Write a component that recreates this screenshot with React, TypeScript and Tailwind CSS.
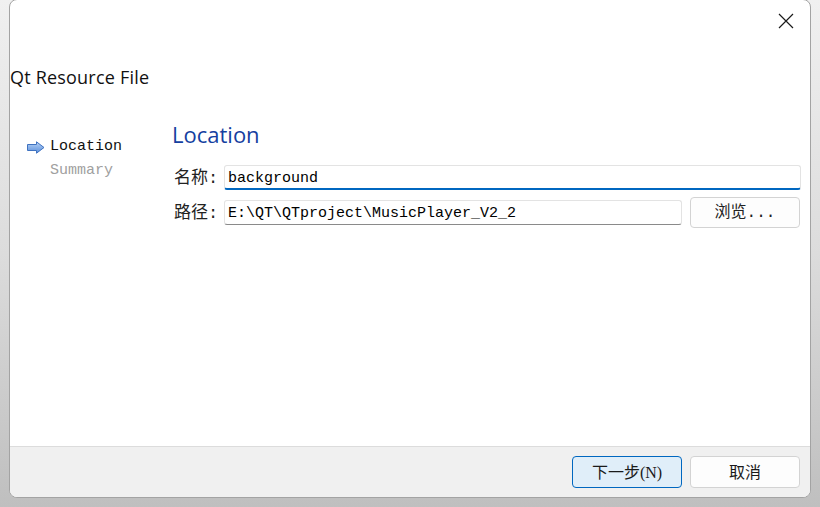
import React from 'react';

const mono = { fontFamily: '"Liberation Mono", "Noto Sans CJK SC", monospace' };
const serifCjk = { fontFamily: '"Liberation Serif", "Noto Sans CJK SC", serif' };

const NavArrow = () => (
  <svg width="18" height="13" viewBox="0 0 18 13" className="shrink-0">
    <defs>
      <linearGradient id="arrowFill" x1="0" y1="0" x2="0" y2="1">
        <stop offset="0" stopColor="#b9d3f5" />
        <stop offset="1" stopColor="#5a8fdc" />
      </linearGradient>
    </defs>
    <path d="M0.5 3.5 H9.5 V0.8 L17 6.5 L9.5 12.2 V9.5 H0.5 Z" fill="url(#arrowFill)" stroke="#3f72c0" strokeWidth="1" strokeLinejoin="round" />
  </svg>
);

const App = () => {
  return (
    <div className="w-[820px] h-[507px] overflow-hidden bg-gradient-to-b from-[#f0f0f0] via-[#dcdcdc] to-[#bfbfbf]">
      <div className="ml-[9px] mt-[-1px] w-[802px] h-[499px] flex flex-col bg-white border border-[#a3a3a3] rounded-[8px] overflow-hidden">
        {/* title bar */}
        <div className="h-[40px] flex justify-end pt-[13px] pr-[16px]">
          <svg width="16" height="16" viewBox="0 0 16 16">
            <path d="M1 1 L15 15 M15 1 L1 15" stroke="#1a1a1a" strokeWidth="1.2" />
          </svg>
        </div>
        <div className="mt-[25px] h-[24px] leading-[24px] text-[18px] tracking-[0.2px] text-[#111]" style={{ fontFamily: '"Open Sans", sans-serif' }}>
          Qt Resource File
        </div>

        {/* body */}
        <div className="flex-1 flex">
          <div className="w-[162px] pl-[17px] pt-[46px] text-[15px] leading-[24px]" style={mono}>
            <div className="flex items-center gap-[5px] text-[#111]">
              <NavArrow />
              <span>Location</span>
            </div>
            <div className="pl-[23px] text-[#a0a0a0]">Summary</div>
          </div>

          <div className="flex-1 pr-[9px] pt-[30px]">
            <div className="h-[30px] leading-[30px] text-[22px] text-[#1440a0]" style={{ fontFamily: '"Open Sans", sans-serif' }}>
              Location
            </div>

            <div className="mt-[16px] flex items-center h-[25px]">
              <div className="w-[52px] pl-[2px] text-[17px] text-[#222]" style={mono}>
                <span style={{ fontFamily: '"Noto Sans CJK SC", sans-serif' }}>名称</span>:
              </div>
              <div className="flex-1 h-[25px] border border-[#e3e3e3] border-b-2 border-b-[#0067c0] rounded-[3px] pl-[3px] pt-[3px] text-[15px] leading-[19px] text-black" style={mono}>
                background
              </div>
            </div>

            <div className="mt-[7px] flex items-center h-[31px] gap-[8px]">
              <div className="flex items-center flex-1">
                <div className="w-[52px] pl-[2px] text-[17px] text-[#222]" style={mono}>
                  <span style={{ fontFamily: '"Noto Sans CJK SC", sans-serif' }}>路径</span>:
                </div>
                <div className="flex-1 h-[25px] border border-[#e3e3e3] border-b-[#8a8a8a] rounded-[3px] pl-[3px] pt-[2px] text-[15px] leading-[21px] text-black" style={mono}>
                  E:\QT\QTproject\MusicPlayer_V2_2
                </div>
              </div>
              <button className="w-[110px] h-[31px] mr-[1px] bg-[#fdfdfd] border border-[#d3d3d3] rounded-[4px] text-[16px] text-[#222]" style={mono}>
                浏览...
              </button>
            </div>
          </div>
        </div>

        {/* footer */}
        <div className="h-[51px] shrink-0 bg-[#f0f0f0] border-t border-[#dcdcdc] flex justify-end items-start pt-[9px] pr-[10px] gap-[8px]" style={serifCjk}>
          <button className="w-[110px] h-[32px] pt-[2px] bg-[#e0eef9] border border-[#0067c0] rounded-[4px] text-[16px] text-[#1a1a1a]">
            下一步(N)
          </button>
          <button className="w-[110px] h-[32px] pt-[2px] bg-[#fdfdfd] border border-[#d3d3d3] rounded-[4px] text-[16px] text-[#1a1a1a]">
            取消
          </button>
        </div>
      </div>
    </div>
  );
};

export default App;
